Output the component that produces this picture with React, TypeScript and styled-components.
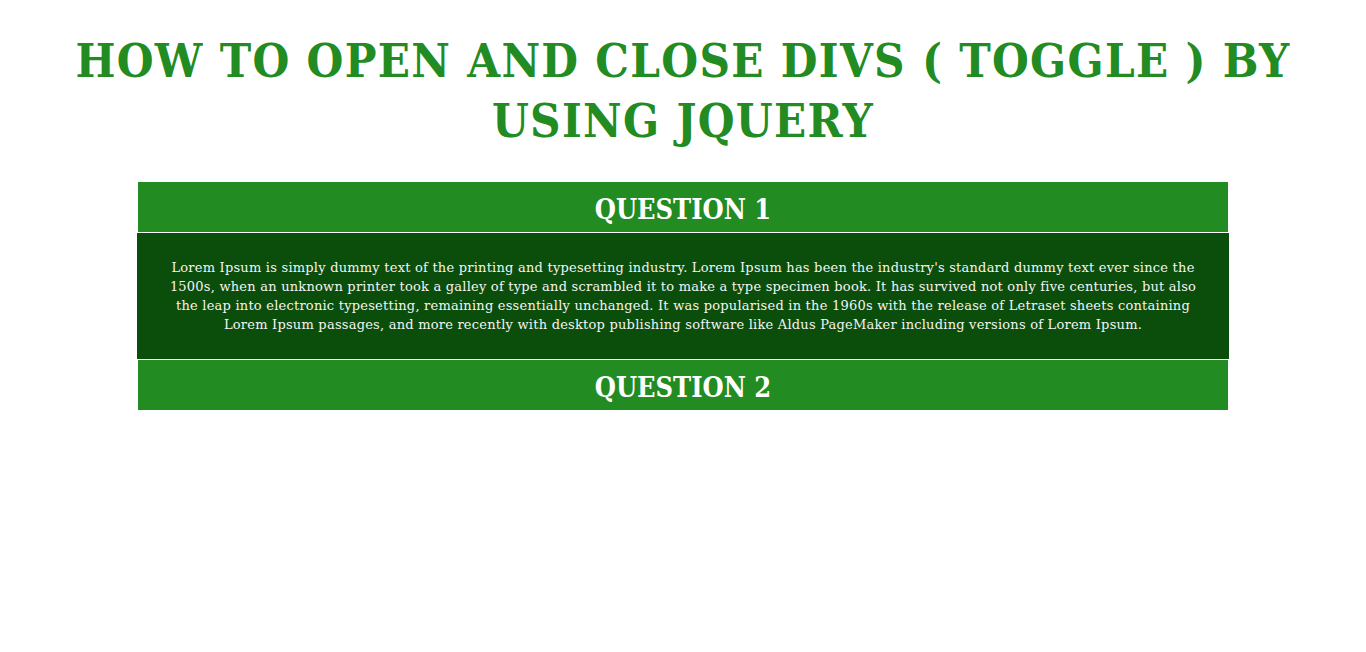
import React, { useState } from "react";
import styled, { createGlobalStyle } from "styled-components";

const GlobalStyle = createGlobalStyle`
  html, body {
    margin: 0;
    padding: 0;
    background: #ffffff;
  }
  body {
    font-family: "DejaVu Serif", "Liberation Serif", serif;
  }
`;

const Page = styled.div`
  padding-top: 31px;
`;

const Title = styled.h1`
  margin: 0 0 31px;
  text-align: center;
  color: #228b22;
  font-family: "DejaVu Serif", "Liberation Serif", serif;
  font-stretch: condensed;
  font-size: 47px;
  line-height: 60px;
  font-weight: bold;
  letter-spacing: 1.3px;
  text-transform: uppercase;
`;

const Accordion = styled.div`
  width: 1090px;
  margin: 0 auto;
  display: flex;
  flex-direction: column;
  gap: 1px;
`;

const QuestionHeader = styled.div`
  box-sizing: border-box;
  height: 50px;
  padding-top: 4px;
  background: #228b22;
  color: #ffffff;
  display: flex;
  align-items: center;
  justify-content: center;
  font-family: "DejaVu Serif", "Liberation Serif", serif;
  font-stretch: condensed;
  font-size: 27px;
  font-weight: bold;
  cursor: pointer;
  user-select: none;
`;

const Answer = styled.div`
  margin: 0 -1px;
  padding: 25px 26px;
  background: #0b4d0b;
  color: #f4f4f4;
  text-align: center;
  font-family: "DejaVu Serif", "Liberation Serif", serif;
  font-size: 13px;
  line-height: 19px;
  letter-spacing: 0.22px;
`;

const LOREM =
  "Lorem Ipsum is simply dummy text of the printing and typesetting industry. Lorem Ipsum has been the industry's standard dummy text ever since the 1500s, when an unknown printer took a galley of type and scrambled it to make a type specimen book. It has survived not only five centuries, but also the leap into electronic typesetting, remaining essentially unchanged. It was popularised in the 1960s with the release of Letraset sheets containing Lorem Ipsum passages, and more recently with desktop publishing software like Aldus PageMaker including versions of Lorem Ipsum.";

const items = [
  { q: "Question 1", a: LOREM },
  { q: "Question 2", a: LOREM },
];

export default function App() {
  const [open, setOpen] = useState<number | null>(0);
  return (
    <Page>
      <GlobalStyle />
      <Title>How to open and close divs ( toggle ) by using jquery</Title>
      <Accordion>
        {items.map((it, i) => (
          <React.Fragment key={it.q}>
            <QuestionHeader onClick={() => setOpen(open === i ? null : i)}>
              {it.q.toUpperCase()}
            </QuestionHeader>
            {open === i && <Answer>{it.a}</Answer>}
          </React.Fragment>
        ))}
      </Accordion>
    </Page>
  );
}
